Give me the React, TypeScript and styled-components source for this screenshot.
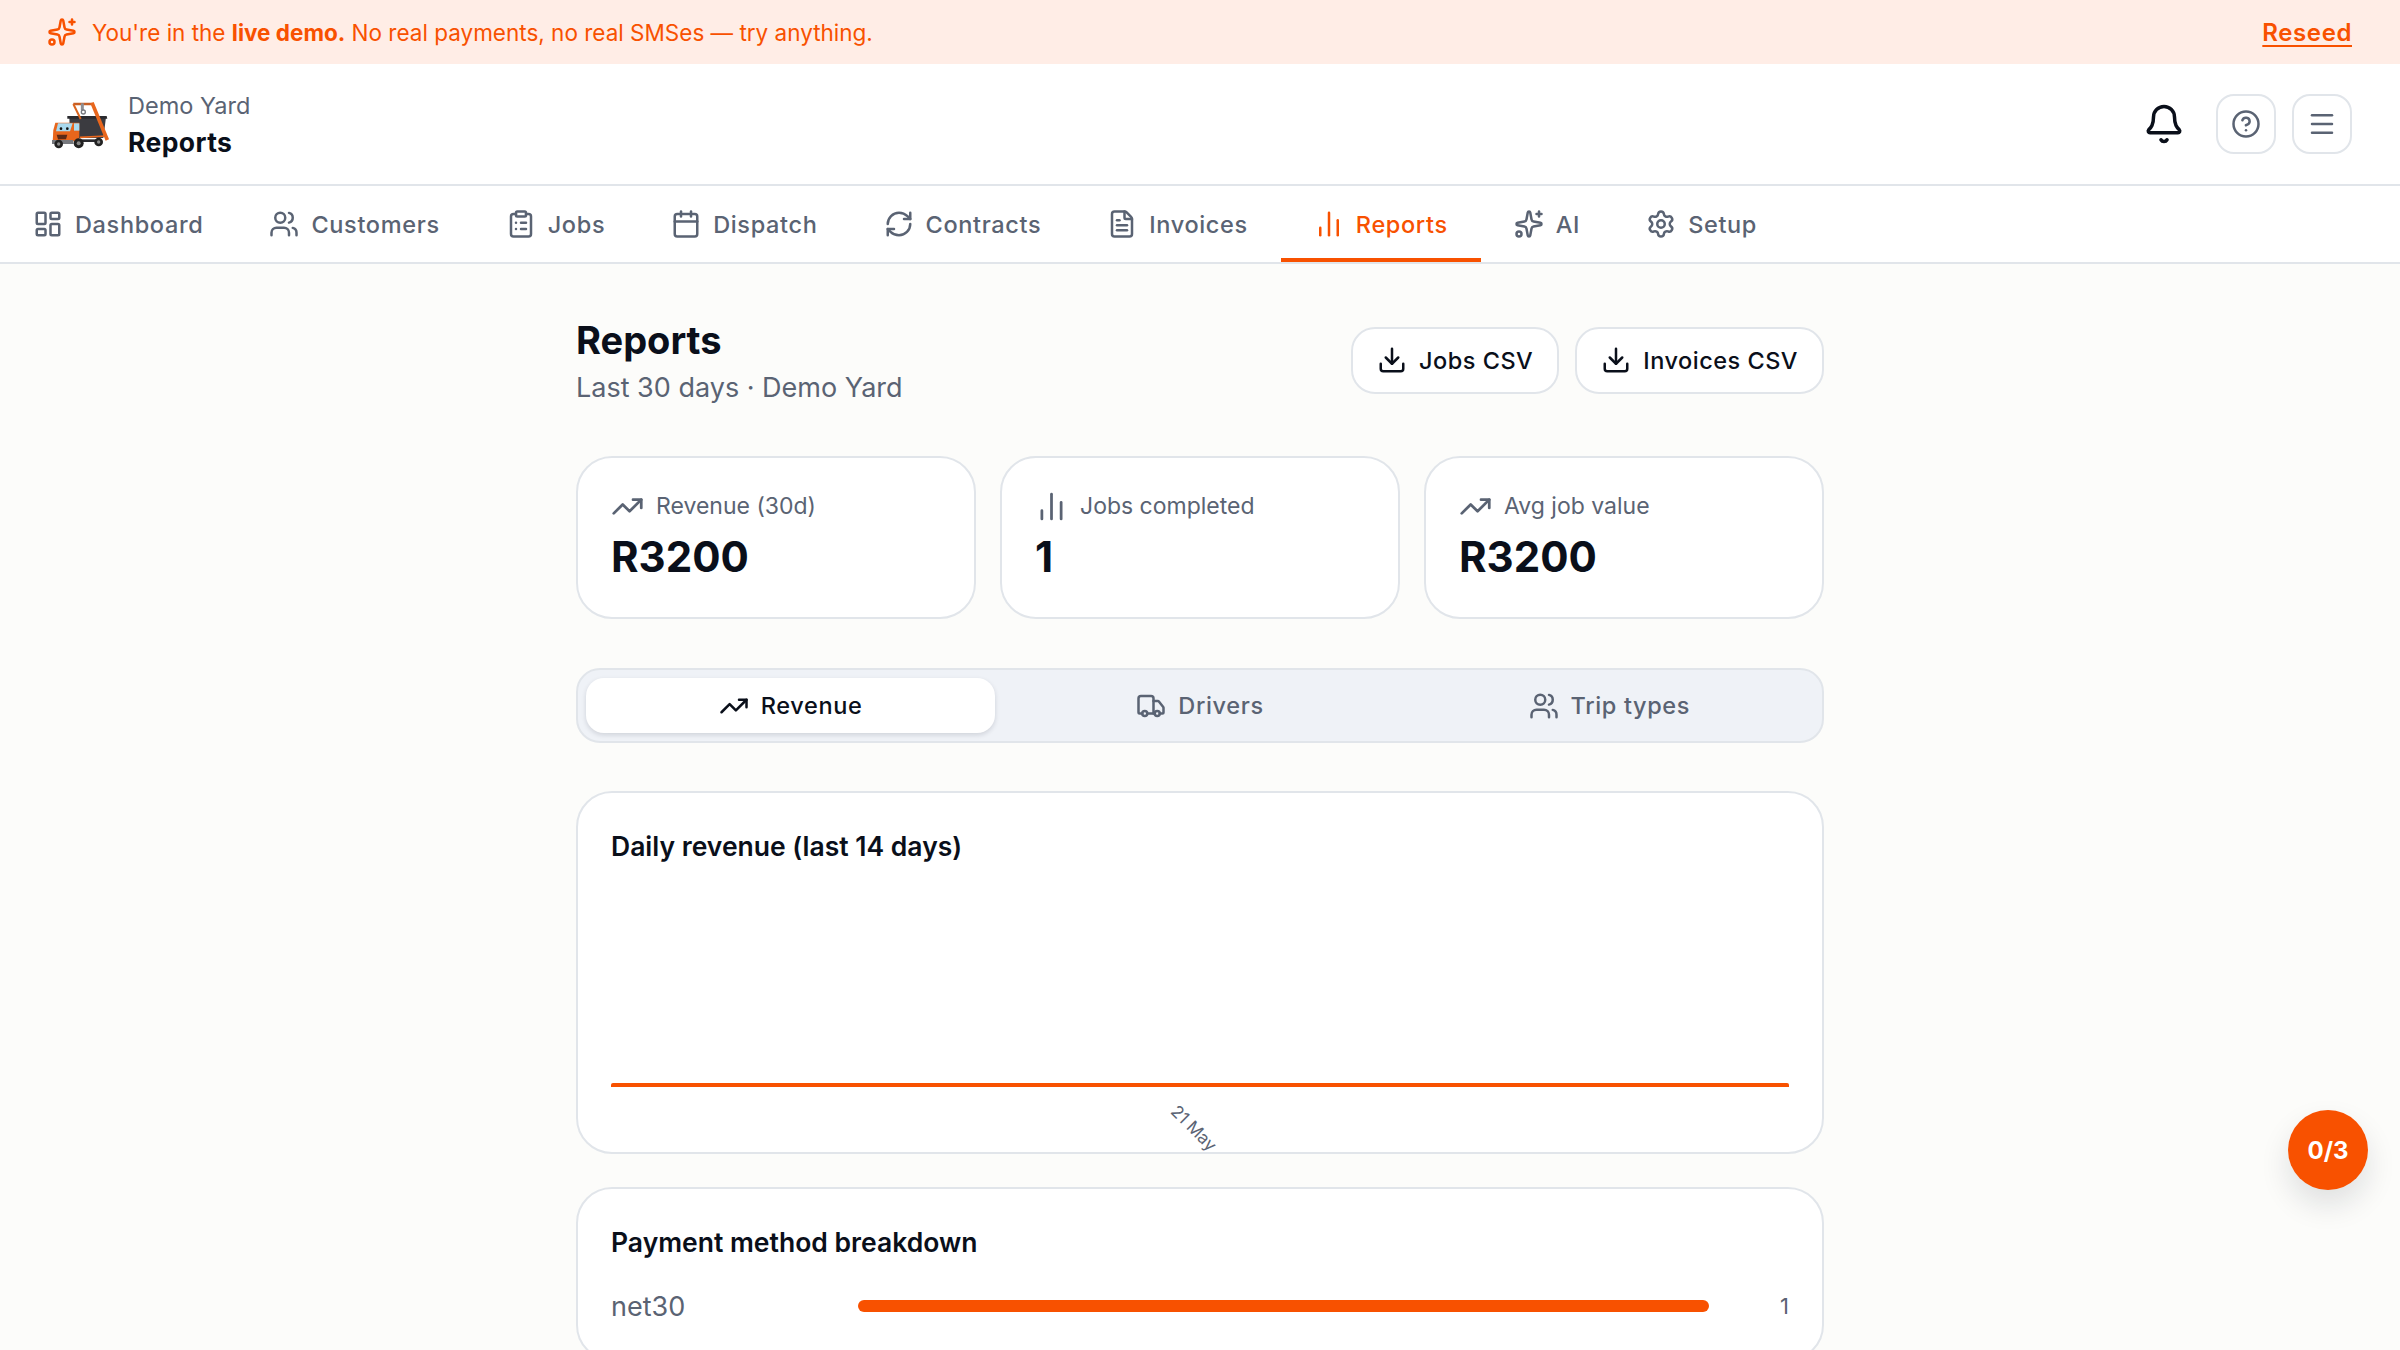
import React from "react";
import styled, { createGlobalStyle } from "styled-components";
import {
  Bell, Calendar, ChartNoAxesColumn, CircleHelp, ClipboardList, Download, FileText,
  LayoutDashboard, Menu, RefreshCw, Settings, Sparkles, TrendingUp, Truck, Users,
} from "lucide-react";

const ORANGE = "#f85100";
const INK = "#0a0f1a";
const GREY = "#5a6373";
const LINE = "#e1e5ea";

const Global = createGlobalStyle`
  html, body { margin: 0; padding: 0; height: 100%; overflow: hidden; background: #fcfcfa; }
  * { box-sizing: border-box; }
  body { font-family: Inter, "Liberation Sans", sans-serif; color: ${INK}; }
`;

const Page = styled.div`
  width: 2400px;
  height: 1350px;
  overflow: hidden;
  position: relative;
`;

const Banner = styled.div`
  height: 64px;
  background: #ffede6;
  color: ${ORANGE};
  display: flex;
  align-items: center;
  justify-content: space-between;
  padding: 0 48px 0 47px;
  font-size: 22.5px;
`;
const BannerText = styled.div`
  display: flex;
  align-items: center;
  gap: 15px;
  b { font-weight: 700; }
`;
const Reseed = styled.a`
  font-weight: 600;
  font-size: 24px;
  letter-spacing: 0.6px;
  text-decoration: underline;
  text-decoration-thickness: 2px;
  text-underline-offset: 4px;
`;

const Header = styled.header`
  height: 122px;
  background: #fff;
  border-bottom: 2px solid ${LINE};
  display: flex;
  align-items: center;
  justify-content: space-between;
  padding: 0 48px;
`;
const Brand = styled.div`
  display: flex;
  align-items: center;
  gap: 8px;
`;
const BrandText = styled.div`
  display: flex;
  flex-direction: column;
`;
const Yard = styled.span`
  font-size: 23.5px;
  line-height: 36px;
  color: ${GREY};
`;
const Crumb = styled.span`
  font-size: 26.5px;
  line-height: 36px;
  font-weight: 700;
  letter-spacing: 0.4px;
`;
const Actions = styled.div`
  display: flex;
  align-items: center;
  gap: 16px;
`;
const BellButton = styled.div`
  width: 60px;
  height: 60px;
  margin-right: 6px;
  display: flex;
  align-items: center;
  justify-content: center;
  color: ${INK};
`;
const IconButton = styled.div`
  width: 60px;
  height: 60px;
  border: 2px solid ${LINE};
  border-radius: 18px;
  background: #fff;
  color: ${GREY};
  display: flex;
  align-items: center;
  justify-content: center;
`;

const Nav = styled.nav`
  height: 78px;
  background: #fff;
  border-bottom: 2px solid ${LINE};
  display: flex;
`;
const NavTab = styled.div<{ $active?: boolean }>`
  height: 76px;
  padding: 0 33px;
  display: flex;
  align-items: center;
  gap: 12px;
  font-size: 23.5px;
  font-weight: 500;
  letter-spacing: 0.65px;
  color: ${(p) => (p.$active ? ORANGE : GREY)};
  border-bottom: 4px solid ${(p) => (p.$active ? ORANGE : "transparent")};
  padding-top: 4px;
`;

const Main = styled.main`
  width: 1248px;
  margin: 0 auto;
  padding-top: 48px;
`;
const TitleRow = styled.div`
  display: flex;
  align-items: center;
  justify-content: space-between;
`;
const Title = styled.h1`
  margin: 0;
  font-size: 38px;
  line-height: 56px;
  font-weight: 700;
`;
const Sub = styled.div`
  font-size: 27px;
  line-height: 40px;
  color: ${GREY};
`;
const Exports = styled.div`
  display: flex;
  gap: 16px;
`;
const ExportButton = styled.div`
  height: 67px;
  padding: 0 24px;
  border: 2px solid ${LINE};
  border-radius: 24px;
  background: #fff;
  display: flex;
  align-items: center;
  gap: 12px;
  font-size: 23.5px;
  font-weight: 500;
  letter-spacing: 0.5px;
`;

const Stats = styled.div`
  display: grid;
  grid-template-columns: repeat(3, 1fr);
  gap: 24px;
  margin-top: 48px;
`;
const StatCard = styled.div`
  height: 163px;
  border: 2px solid ${LINE};
  border-radius: 36px;
  background: #fff;
  padding: 30px 33px;
`;
const StatLabel = styled.div`
  display: flex;
  align-items: center;
  gap: 12px;
  height: 36px;
  font-size: 23px;
  color: ${GREY};
`;
const StatValue = styled.div`
  margin-top: 6px;
  font-size: 42px;
  line-height: 54px;
  font-weight: 700;
`;

const Segments = styled.div`
  height: 75px;
  margin-top: 49px;
  padding: 8px;
  border: 2px solid ${LINE};
  border-radius: 24px;
  background: #eff2f7;
  display: grid;
  grid-template-columns: repeat(3, 1fr);
`;
const Segment = styled.div<{ $active?: boolean }>`
  display: flex;
  align-items: center;
  justify-content: center;
  gap: 12px;
  border-radius: 18px;
  font-size: 23.5px;
  font-weight: 500;
  letter-spacing: 0.65px;
  color: ${(p) => (p.$active ? INK : GREY)};
  background: ${(p) => (p.$active ? "#fff" : "transparent")};
  box-shadow: ${(p) => (p.$active ? "0 2px 5px rgba(15, 23, 42, 0.14)" : "none")};
`;

const Card = styled.section`
  margin-top: 33px;
  padding: 33px;
  border: 2px solid ${LINE};
  border-radius: 36px;
  background: #fff;
`;
const ChartCard = styled(Card)`
  margin-top: 48px;
`;
const CardTitle = styled.h2`
  margin: 0;
  font-size: 26.5px;
  line-height: 40px;
  font-weight: 600;
`;
const ChartSvg = styled.svg`
  display: block;
  width: 1178px;
  height: 253px;
  overflow: visible;
`;
const BreakdownRow = styled.div`
  margin-top: 24px;
  display: grid;
  grid-template-columns: 247px 851px 1fr;
  align-items: center;
  height: 40px;
`;
const Method = styled.span`
  font-size: 27px;
  color: ${GREY};
`;
const Track = styled.div`
  height: 12px;
  border-radius: 6px;
  background: ${ORANGE};
`;
const Count = styled.span`
  justify-self: end;
  font-size: 22px;
  color: ${GREY};
`;

const Fab = styled.div`
  position: absolute;
  right: 32px;
  top: 1110px;
  width: 80px;
  height: 80px;
  border-radius: 50%;
  background: ${ORANGE};
  color: #fff;
  display: flex;
  align-items: center;
  justify-content: center;
  font-size: 24px;
  font-weight: 700;
  box-shadow: 0 15px 30px rgba(15, 23, 42, 0.12);
`;

const Logo = () => (
  <svg width="72" height="72" viewBox="54 24 216 216" aria-hidden="true">
    <path d="M118 112h110l-8 62h-100z" fill="#3b3b40" />
    <path d="M112 108h118l2 8H112z" fill="#2a2a2e" />
    <path d="M130 72l36 0M165 72l22 0" stroke="#c85f24" strokeWidth="7" />
    <path d="M130 72l22 45" stroke="#d9651f" strokeWidth="6" fill="none" />
    <path d="M186 68l46 112" stroke="#e8661c" strokeWidth="11" fill="none" />
    <path d="M150 172l78-4" stroke="#e8661c" strokeWidth="5" />
    <path d="M157 70v20" stroke="#8d8f94" strokeWidth="9" />
    <circle cx="160" cy="96" r="6" fill="none" stroke="#77797e" strokeWidth="4" />
    <path d="M76 128h72v56H68l2-34z" fill="#e8661c" />
    <path d="M84 130h44l-8 24H78z" fill="#a9d9ee" />
    <path d="M132 130h16v22h-16z" fill="#a9d9ee" />
    <circle cx="93" cy="146" r="4" fill="#111" />
    <circle cx="112" cy="146" r="4" fill="#111" />
    <path d="M80 164h32l-4 14H84z" fill="#5c2a16" />
    <path d="M66 180h64v12H66z" fill="#77797e" />
    <path d="M140 178h70v8h-70z" fill="#2a2a2e" />
    <circle cx="86" cy="192" r="13" fill="#222" />
    <circle cx="86" cy="192" r="5" fill="#888" />
    <circle cx="146" cy="190" r="15" fill="#222" />
    <circle cx="146" cy="190" r="6" fill="#888" />
    <circle cx="206" cy="186" r="13" fill="#222" />
    <circle cx="206" cy="186" r="5" fill="#888" />
  </svg>
);

const tabs = [
  { label: "Dashboard", Icon: LayoutDashboard },
  { label: "Customers", Icon: Users },
  { label: "Jobs", Icon: ClipboardList },
  { label: "Dispatch", Icon: Calendar },
  { label: "Contracts", Icon: RefreshCw },
  { label: "Invoices", Icon: FileText },
  { label: "Reports", Icon: ChartNoAxesColumn, active: true },
  { label: "AI", Icon: Sparkles },
  { label: "Setup", Icon: Settings },
];

const stats = [
  { label: "Revenue (30d)", value: "R3200", Icon: TrendingUp },
  { label: "Jobs completed", value: "1", Icon: ChartNoAxesColumn },
  { label: "Avg job value", value: "R3200", Icon: TrendingUp },
];

const segments = [
  { label: "Revenue", Icon: TrendingUp, active: true },
  { label: "Drivers", Icon: Truck },
  { label: "Trip types", Icon: Users },
];

export default function App() {
  return (
    <Page>
      <Global />
      <Banner>
        <BannerText>
          <Sparkles size={30} />
          <span>
            You're in the <b>live demo.</b> No real payments, no real SMSes — try anything.
          </span>
        </BannerText>
        <Reseed>Reseed</Reseed>
      </Banner>
      <Header>
        <Brand>
          <Logo />
          <BrandText>
            <Yard>Demo Yard</Yard>
            <Crumb>Reports</Crumb>
          </BrandText>
        </Brand>
        <Actions>
          <BellButton>
            <Bell size={42} />
          </BellButton>
          <IconButton>
            <CircleHelp size={30} />
          </IconButton>
          <IconButton>
            <Menu size={30} />
          </IconButton>
        </Actions>
      </Header>
      <Nav>
        {tabs.map(({ label, Icon, active }) => (
          <NavTab key={label} $active={active}>
            <Icon size={30} />
            {label}
          </NavTab>
        ))}
      </Nav>
      <Main>
        <TitleRow>
          <div>
            <Title>Reports</Title>
            <Sub>Last 30 days · Demo Yard</Sub>
          </div>
          <Exports>
            <ExportButton>
              <Download size={30} />
              Jobs CSV
            </ExportButton>
            <ExportButton>
              <Download size={30} />
              Invoices CSV
            </ExportButton>
          </Exports>
        </TitleRow>
        <Stats>
          {stats.map(({ label, value, Icon }) => (
            <StatCard key={label}>
              <StatLabel>
                <Icon size={33} />
                {label}
              </StatLabel>
              <StatValue>{value}</StatValue>
            </StatCard>
          ))}
        </Stats>
        <Segments>
          {segments.map(({ label, Icon, active }) => (
            <Segment key={label} $active={active}>
              <Icon size={30} />
              {label}
            </Segment>
          ))}
        </Segments>
        <ChartCard>
          <CardTitle>Daily revenue (last 14 days)</CardTitle>
          <ChartSvg viewBox="0 0 1178 253">
            <path d="M0 221v-2a2 2 0 0 1 2-2h1174a2 2 0 0 1 2 2v2z" fill={ORANGE} />
            <text
              x="582"
              y="263"
              textAnchor="middle"
              dominantBaseline="middle"
              fontFamily="Inter, sans-serif"
              fontSize="17"
              fill={GREY}
              transform="rotate(45 582 263)"
            >
              21 May
            </text>
          </ChartSvg>
        </ChartCard>
        <Card>
          <CardTitle>Payment method breakdown</CardTitle>
          <BreakdownRow>
            <Method>net30</Method>
            <Track />
            <Count>1</Count>
          </BreakdownRow>
        </Card>
      </Main>
      <Fab>0/3</Fab>
    </Page>
  );
}
